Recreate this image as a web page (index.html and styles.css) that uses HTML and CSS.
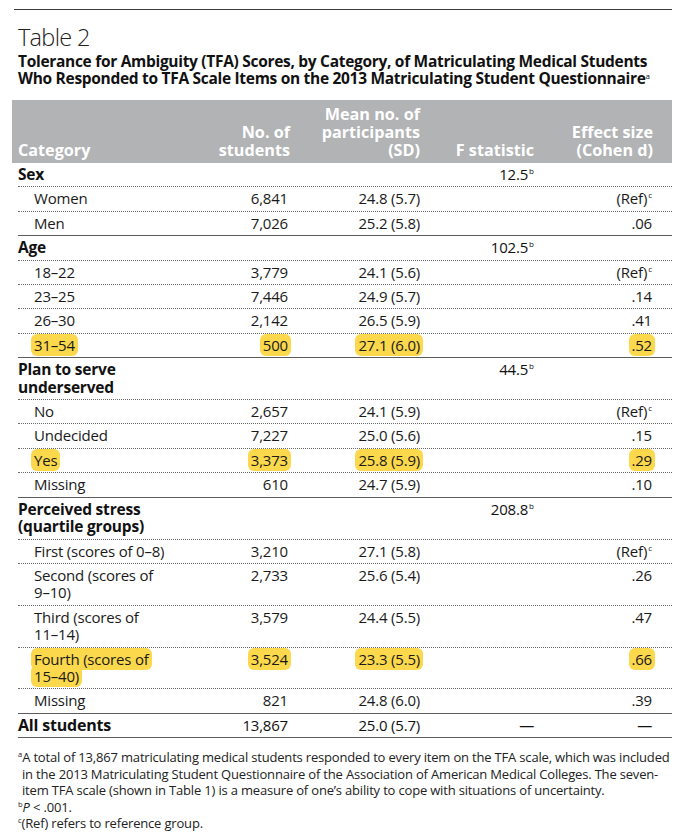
FILE: index.html
```html
<!DOCTYPE html>
<html lang="en">
<head>
<meta charset="utf-8">
<title>Table 2</title>
<link rel="stylesheet" href="styles.css">
</head>
<body>
<div class="page">
  <div class="top-rule"></div>
  <h1 class="table-num">Table 2</h1>
  <h2 class="caption">Tolerance for Ambiguity (TFA) Scores, by Category, of Matriculating Medical Students Who Responded to TFA Scale Items on the 2013 Matriculating Student Questionnaire<sup>a</sup></h2>

  <div class="table">
    <div class="row thead">
      <div class="c-cat">Category</div>
      <div class="c-n">No. of<br>students</div>
      <div class="c-mean">Mean no. of<br>participants<br>(SD)</div>
      <div class="c-f">F statistic</div>
      <div class="c-eff">Effect size<br>(Cohen d)</div>
    </div>

    <div class="group">
      <div class="row head"><div class="c-cat">Sex</div><div class="c-n"></div><div class="c-mean"></div><div class="c-f">12.5<sup>b</sup></div><div class="c-eff"></div></div>
      <div class="row sub"><div class="c-cat">Women</div><div class="c-n">6,841</div><div class="c-mean">24.8 (5.7)</div><div class="c-f"></div><div class="c-eff">(Ref)<sup>c</sup></div></div>
      <div class="row sub"><div class="c-cat">Men</div><div class="c-n">7,026</div><div class="c-mean">25.2 (5.8)</div><div class="c-f"></div><div class="c-eff">.06</div></div>
    </div>

    <div class="group">
      <div class="row head"><div class="c-cat">Age</div><div class="c-n"></div><div class="c-mean"></div><div class="c-f">102.5<sup>b</sup></div><div class="c-eff"></div></div>
      <div class="row sub"><div class="c-cat">18–22</div><div class="c-n">3,779</div><div class="c-mean">24.1 (5.6)</div><div class="c-f"></div><div class="c-eff">(Ref)<sup>c</sup></div></div>
      <div class="row sub"><div class="c-cat">23–25</div><div class="c-n">7,446</div><div class="c-mean">24.9 (5.7)</div><div class="c-f"></div><div class="c-eff">.14</div></div>
      <div class="row sub"><div class="c-cat">26–30</div><div class="c-n">2,142</div><div class="c-mean">26.5 (5.9)</div><div class="c-f"></div><div class="c-eff">.41</div></div>
      <div class="row sub"><div class="c-cat"><span class="hl">31–54</span></div><div class="c-n"><span class="hl">500</span></div><div class="c-mean"><span class="hl">27.1 (6.0)</span></div><div class="c-f"></div><div class="c-eff"><span class="hl">.52</span></div></div>
    </div>

    <div class="group">
      <div class="row head"><div class="c-cat">Plan to serve underserved</div><div class="c-n"></div><div class="c-mean"></div><div class="c-f">44.5<sup>b</sup></div><div class="c-eff"></div></div>
      <div class="row sub"><div class="c-cat">No</div><div class="c-n">2,657</div><div class="c-mean">24.1 (5.9)</div><div class="c-f"></div><div class="c-eff">(Ref)<sup>c</sup></div></div>
      <div class="row sub"><div class="c-cat">Undecided</div><div class="c-n">7,227</div><div class="c-mean">25.0 (5.6)</div><div class="c-f"></div><div class="c-eff">.15</div></div>
      <div class="row sub"><div class="c-cat"><span class="hl">Yes</span></div><div class="c-n"><span class="hl">3,373</span></div><div class="c-mean"><span class="hl">25.8 (5.9)</span></div><div class="c-f"></div><div class="c-eff"><span class="hl">.29</span></div></div>
      <div class="row sub"><div class="c-cat">Missing</div><div class="c-n">610</div><div class="c-mean">24.7 (5.9)</div><div class="c-f"></div><div class="c-eff">.10</div></div>
    </div>

    <div class="group">
      <div class="row head"><div class="c-cat">Perceived stress (quartile groups)</div><div class="c-n"></div><div class="c-mean"></div><div class="c-f">208.8<sup>b</sup></div><div class="c-eff"></div></div>
      <div class="row sub"><div class="c-cat">First (scores of <span class="nw">0–8)</span></div><div class="c-n">3,210</div><div class="c-mean">27.1 (5.8)</div><div class="c-f"></div><div class="c-eff">(Ref)<sup>c</sup></div></div>
      <div class="row sub"><div class="c-cat">Second (scores of <span class="nw">9–10)</span></div><div class="c-n">2,733</div><div class="c-mean">25.6 (5.4)</div><div class="c-f"></div><div class="c-eff">.26</div></div>
      <div class="row sub"><div class="c-cat">Third (scores of <span class="nw">11–14)</span></div><div class="c-n">3,579</div><div class="c-mean">24.4 (5.5)</div><div class="c-f"></div><div class="c-eff">.47</div></div>
      <div class="row sub"><div class="c-cat"><span class="hl">Fourth (scores of <span class="nw">15–40)</span></span></div><div class="c-n"><span class="hl">3,524</span></div><div class="c-mean"><span class="hl">23.3 (5.5)</span></div><div class="c-f"></div><div class="c-eff"><span class="hl">.66</span></div></div>
      <div class="row sub"><div class="c-cat">Missing</div><div class="c-n">821</div><div class="c-mean">24.8 (6.0)</div><div class="c-f"></div><div class="c-eff">.39</div></div>
    </div>

    <div class="group">
      <div class="row head total"><div class="c-cat">All students</div><div class="c-n">13,867</div><div class="c-mean">25.0 (5.7)</div><div class="c-f">—</div><div class="c-eff">—</div></div>
    </div>
  </div>

  <div class="notes">
    <p class="note"><sup>a</sup>A total of 13,867 matriculating medical students responded to every item on the TFA scale, which was included in the 2013 Matriculating Student Questionnaire of the Association of American Medical Colleges. The seven-item TFA scale (shown in Table 1) is a measure of one’s ability to cope with situations of uncertainty.</p>
    <p class="note"><sup>b</sup><i>P</i> &lt; .001.</p>
    <p class="note"><sup>c</sup>(Ref) refers to reference group.</p>
  </div>
</div>
</body>
</html>
```

FILE: styles.css
```css
* { box-sizing: border-box; }

html, body {
  margin: 0;
  padding: 0;
  background: #ffffff;
}

body {
  font-family: "Open Sans", "Noto Sans", sans-serif;
  color: #1a1a1a;
}

.page {
  width: 683px;
  padding: 9px 8px 0 18px;
}

.top-rule {
  height: 1px;
  width: 658px;
  background: #3a3a3a;
  margin-left: -4px;
}

.table-num {
  margin: 13px 0 0 0;
  font-size: 23.5px;
  font-weight: 300;
  line-height: 28px;
  letter-spacing: -0.7px;
  color: #222;
}

.caption {
  margin: 2px 0 0 0;
  width: 654px;
  font-size: 15.5px;
  font-weight: 700;
  line-height: 17px;
  letter-spacing: -0.3px;
  color: #111;
}

.caption sup {
  font-size: 8px;
  font-weight: 400;
  vertical-align: 5px;
  line-height: 0;
}

.table {
  margin-top: 13px;
  width: 654px;
}

.row {
  display: grid;
  grid-template-columns: 172px 98px 132px 114px 118px;
  font-size: 15px;
  line-height: 17.4px;
  letter-spacing: -0.2px;
}

.row > div {
  padding: 3px 0;
}

.c-n, .c-mean, .c-f, .c-eff { text-align: right; }

.nw { white-space: nowrap; }

.thead {
  margin-left: -6px;
  padding-left: 6px;
  width: 660px;
  background: #b2b3b5;
  color: #ffffff;
  font-weight: 700;
  font-size: 16.2px;
  line-height: 18px;
  letter-spacing: 0;
  height: 63px;
  align-items: end;
}

.thead > div { padding: 0 0 4px 0; }
.thead .c-n { margin-right: -2px; }
.thead .c-eff { margin-right: -1px; }

.group {
  border-bottom: 1.5px solid #5c5c5c;
}

.head {
  font-weight: 700;
  font-size: 15.5px;
  color: #111;
}

.head .c-f, .head .c-n, .head .c-mean, .head .c-eff {
  font-weight: 400;
  font-size: 15px;
}

.head + .sub { border-top: 1px dotted #6a6a6a; }
.sub + .sub { border-top: 1px dotted #6a6a6a; }

.sub .c-cat { padding-left: 16px; padding-right: 22px; }
.head .c-cat { padding-right: 10px; }

.total .c-cat { font-size: 16px; }

sup {
  font-size: 8px;
  line-height: 0;
  vertical-align: 6px;
  letter-spacing: 0;
}

.c-f sup, .c-eff sup { margin-left: 1px; }

.hl {
  background: #fcd84c;
  border-radius: 6px;
  padding: 1px 3px;
  margin: 0 -3px;
  -webkit-box-decoration-break: clone;
  box-decoration-break: clone;
}

.notes {
  margin-top: 11px;
  width: 657px;
  font-size: 13px;
  line-height: 16.5px;
  letter-spacing: -0.18px;
  color: #222;
}

.note {
  margin: 0;
  padding-left: 4px;
  text-indent: -4px;
}

.note sup {
  font-size: 7.5px;
  vertical-align: 5px;
}
```
